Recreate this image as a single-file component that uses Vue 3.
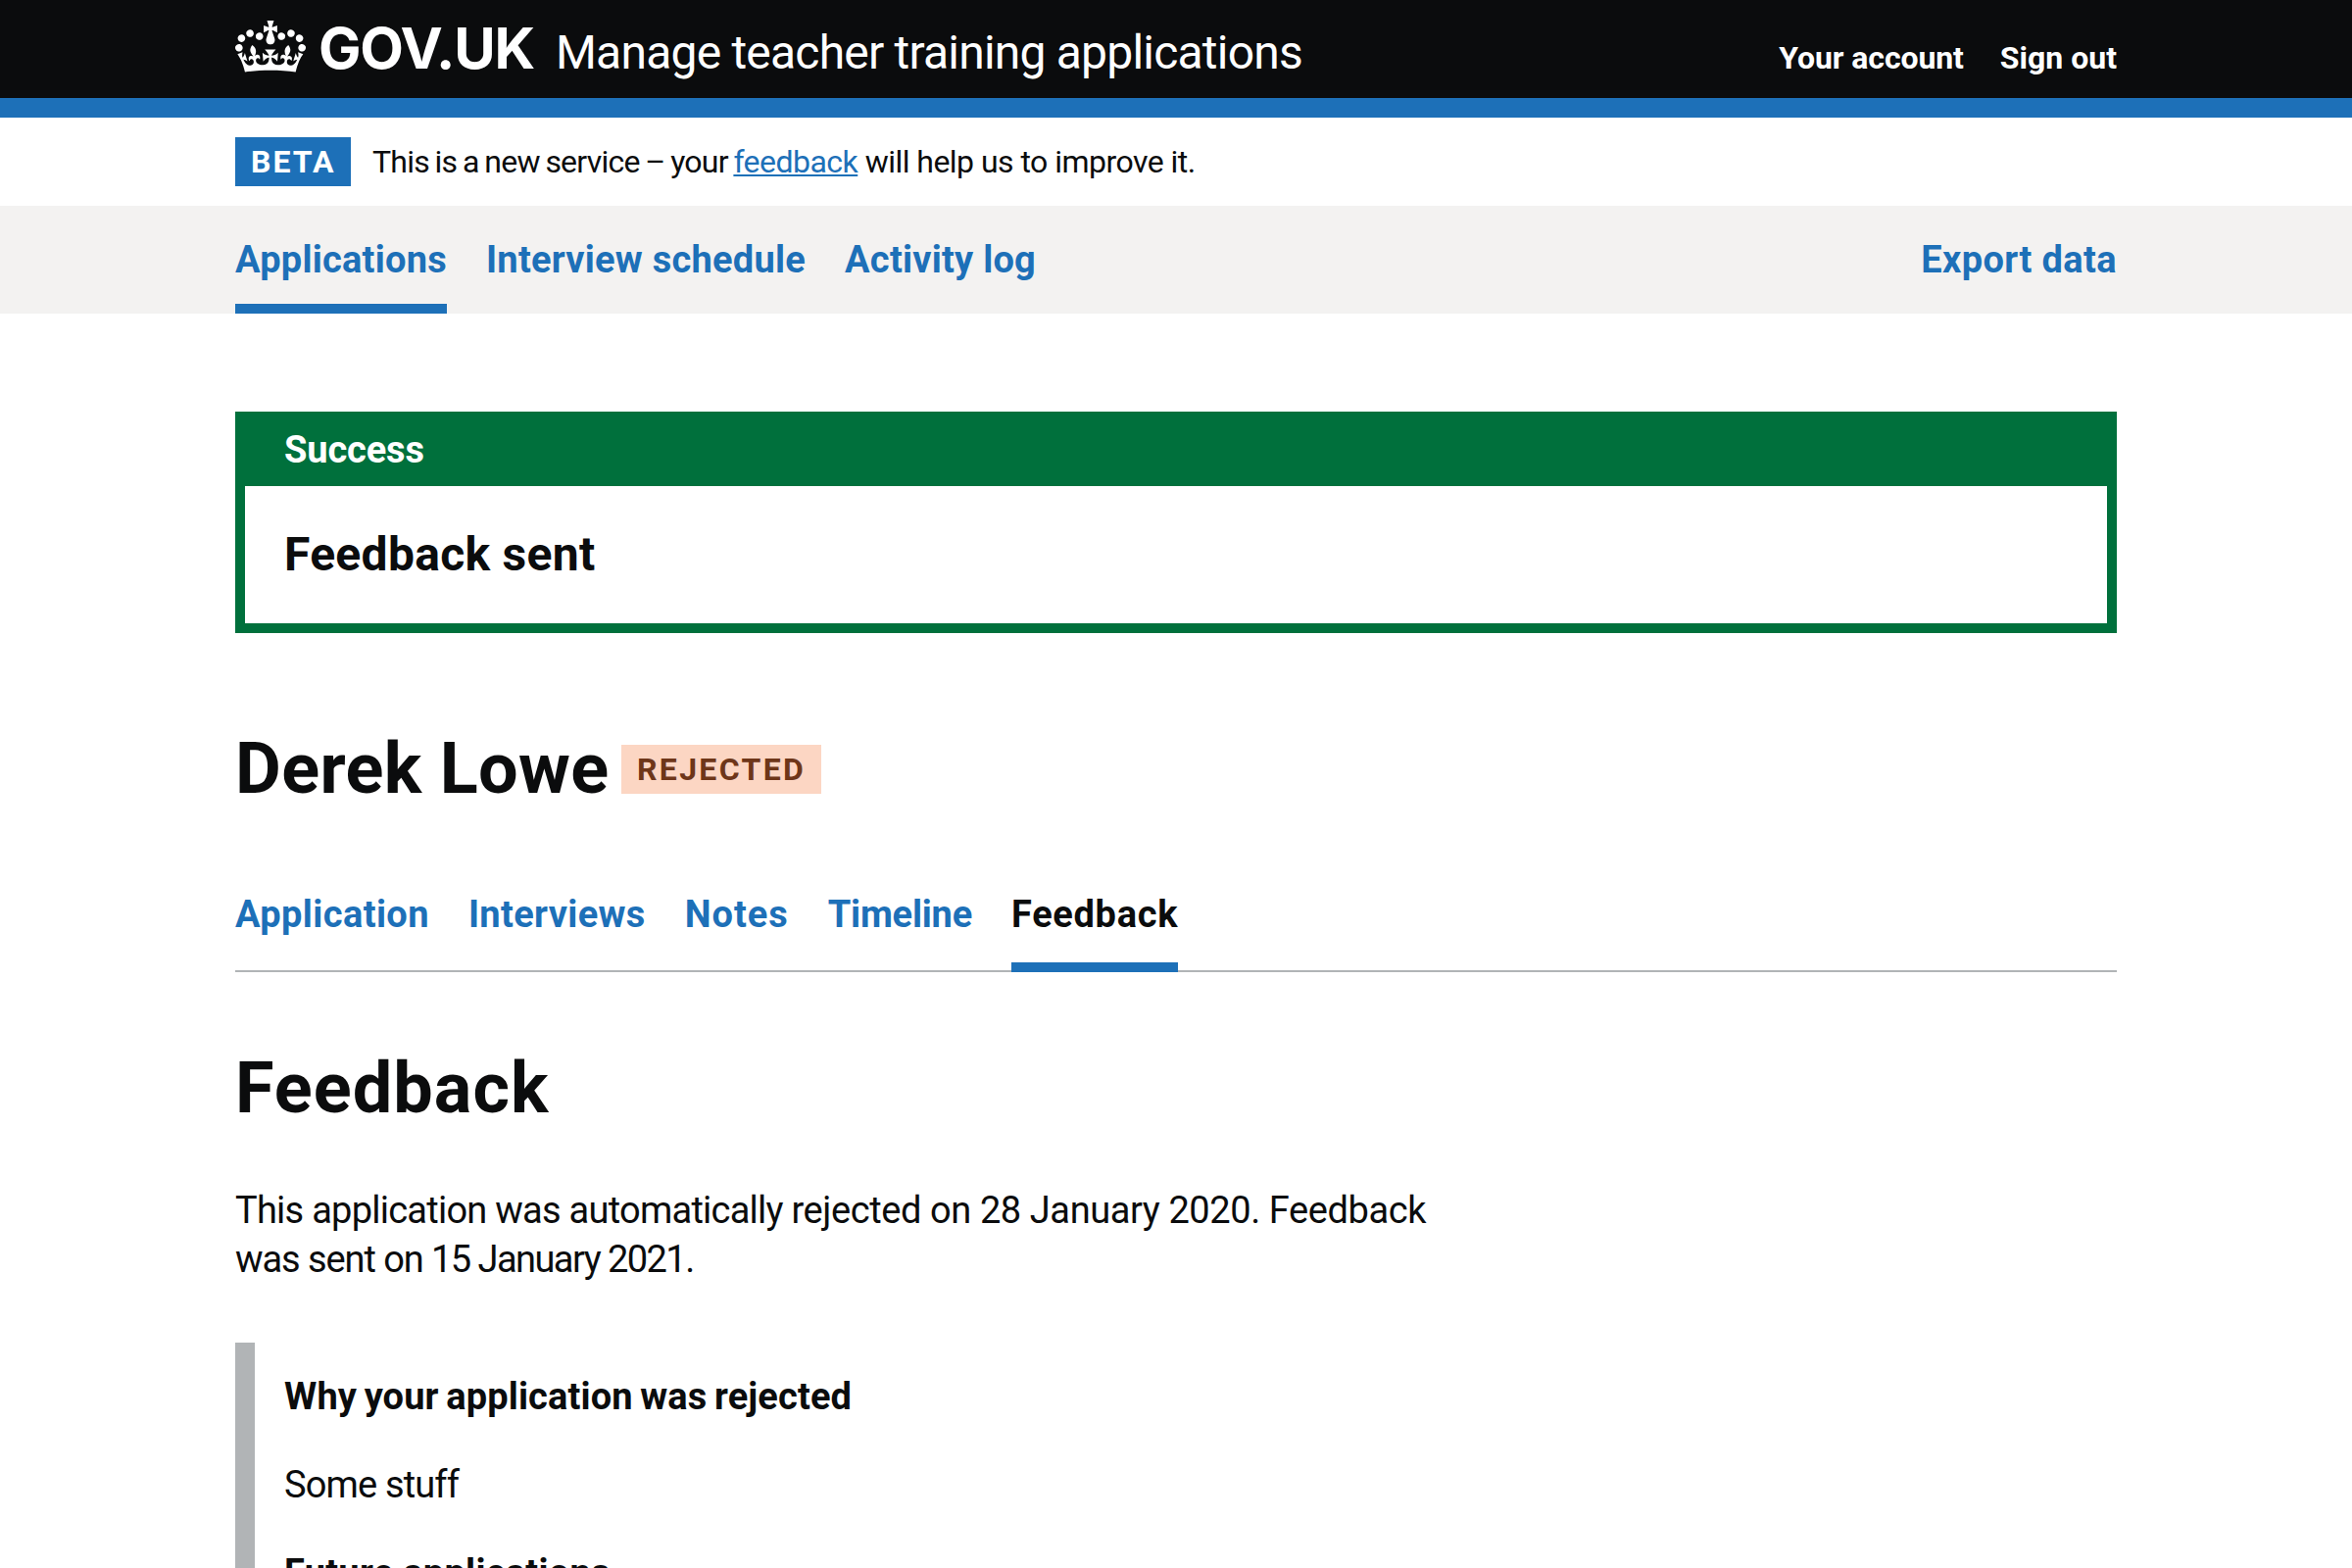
<script setup>
const primary = [
  { label: 'Applications', cls: 'apps', active: true },
  { label: 'Interview schedule', cls: 'sched' },
  { label: 'Activity log', cls: 'log' }
]
const tabs = [
  { label: 'Application', cls: 't-app' },
  { label: 'Interviews', cls: 't-int' },
  { label: 'Notes', cls: 't-notes' },
  { label: 'Timeline', cls: 't-time' },
  { label: 'Feedback', cls: 't-feed', active: true }
]
</script>

<template>
  <div class="page">
    <header class="header">
      <div class="container header-row">
        <a class="logo">
          <svg class="crown" viewBox="0 0 132 97" width="72" height="53" aria-hidden="true">
            <path fill="currentColor" fill-rule="evenodd" d="M25 30.2c3.5 1.5 7.7-.2 9.1-3.7 1.5-3.6-.2-7.8-3.9-9.2-3.6-1.4-7.6.3-9.1 3.9-1.4 3.5.3 7.5 3.9 9zM9 39.5c3.6 1.5 7.8-.2 9.2-3.7 1.5-3.6-.2-7.8-3.9-9.1-3.6-1.5-7.6.2-9.1 3.8-1.4 3.5.3 7.5 3.8 9zM4.4 57.2c3.5 1.5 7.7-.2 9.1-3.8 1.5-3.6-.2-7.7-3.9-9.1-3.5-1.5-7.6.3-9.1 3.8-1.4 3.5.3 7.6 3.9 9.1zm38.3-21.4c3.5 1.5 7.7-.2 9.1-3.8 1.5-3.6-.2-7.7-3.9-9.1-3.6-1.5-7.6.3-9.1 3.8-1.3 3.6.4 7.7 3.9 9.1zm64.4-5.6c-3.6 1.5-7.8-.2-9.1-3.7-1.5-3.6.2-7.8 3.8-9.2 3.6-1.4 7.7.3 9.2 3.9 1.3 3.5-.4 7.5-3.9 9zm15.9 9.3c-3.6 1.5-7.7-.2-9.1-3.7-1.5-3.6.2-7.8 3.7-9.1 3.6-1.5 7.7.2 9.2 3.8 1.5 3.5-.3 7.5-3.8 9zm4.7 17.7c-3.6 1.5-7.8-.2-9.2-3.8-1.5-3.6.2-7.7 3.9-9.1 3.6-1.5 7.7.3 9.2 3.8 1.3 3.5-.4 7.6-3.9 9.1zM89.3 35.8c-3.6 1.5-7.8-.2-9.2-3.8-1.4-3.6.2-7.7 3.9-9.1 3.6-1.5 7.7.3 9.2 3.8 1.4 3.6-.3 7.7-3.9 9.1zM69.7 17.7l8.9 4.7V9.3l-8.9 2.8c-.2-.3-.5-.6-.9-.9L72.4 0H59.6l3.5 11.2c-.3.3-.6.5-.9.9l-8.8-2.8v13.1l8.8-4.7c.3.3.6.7.9.9l-5 15.4v.1c-.2.8-.4 1.6-.4 2.4 0 4.1 3.1 7.5 7 8.1h.2c.3 0 .7.1 1 .1.4 0 .7 0 1-.1h.2c4-.6 7.1-4.1 7.1-8.1 0-.8-.1-1.7-.4-2.4V34l-5.1-15.4c.4-.2.7-.6 1-.9zM66 92.8c16.9 0 32.8 1.1 47.1 3.2 4-16.9 8.9-26.7 14-33.5l-9.6-3.4c1 4.9 1.1 7.2 0 10.2-1.5-1.4-3-4.3-4.2-8.7L108.6 76c2.8-2 5-3.2 7.5-3.3-4.4 9.4-10 11.9-13.6 11.2-4.3-.8-6.3-4.6-5.6-7.9 1-4.7 5.7-5.9 8-.5 4.3-8.7-3-11.4-7.6-8.8 7.1-7.2 7.9-13.5 2.1-21.1-8 6.1-8.1 12.3-4.5 20.8-4.7-5.4-12.1-2.5-9.5 6.2 3.4-5.2 7.9-2 7.2 3.1-.6 4.3-6.4 7.8-13.5 7.2-10.3-.9-10.9-8-11.2-13.8 2.5-.5 7.1 1.8 11 7.3L80.2 60c-4.1 4.4-8 5.3-12.3 5.4 1.4-4.4 8-11.6 8-11.6H55.5s6.4 7.2 7.9 11.6c-4.2-.1-8-1-12.3-5.4l1.4 16.4c3.9-5.5 8.5-7.7 10.9-7.3-.3 5.8-.9 12.8-11.1 13.8-7.2.6-12.9-2.9-13.5-7.2-.7-5 3.8-8.3 7.1-3.1 2.7-8.7-4.6-11.6-9.4-6.2 3.7-8.5 3.6-14.7-4.6-20.8-5.8 7.6-5 13.9 2.2 21.1-4.7-2.6-11.9.1-7.7 8.8 2.3-5.5 7.1-4.2 8.1.5.7 3.3-1.3 7.1-5.7 7.9-3.5.7-9-1.8-13.5-11.2 2.5.1 4.7 1.3 7.5 3.3l-4.7-15.4c-1.2 4.4-2.7 7.2-4.3 8.7-1.1-3-.9-5.3 0-10.2l-9.5 3.4c5 6.9 9.9 16.7 14 33.5 14.8-2.1 30.8-3.2 47.7-3.2z" />
          </svg>
          <span class="logotype">GOV.UK</span>
        </a>
        <a class="service">Manage teacher training applications</a>
        <nav class="account">
          <a class="your">Your account</a>
          <a>Sign out</a>
        </nav>
      </div>
    </header>

    <div class="container phase">
      <strong class="phase-tag">BETA</strong>
      <p class="phase-text"><span class="phase-intro">This is a new service – your </span><a class="phase-link">feedback</a> will help us to improve it.</p>
    </div>

    <nav class="primary">
      <div class="container primary-row">
        <a v-for="item in primary" :key="item.label" class="primary-link" :class="[item.cls, { active: item.active }]">{{ item.label }}</a>
        <a class="primary-link export">Export data</a>
      </div>
    </nav>

    <main class="container">
      <section class="banner">
        <h2 class="banner-title">Success</h2>
        <p class="banner-body">Feedback sent</p>
      </section>

      <div class="heading">
        <h1 class="name">Derek Lowe</h1>
        <strong class="status">Rejected</strong>
      </div>

      <nav class="tabs">
        <a v-for="tab in tabs" :key="tab.label" class="tab" :class="[tab.cls, { current: tab.active }]">{{ tab.label }}</a>
      </nav>

      <h2 class="title">Feedback</h2>
      <p class="lead"><span class="cause">This application was automatically </span><span class="dates">rejected on 28 January 2020. Feedback </span><span class="sent">was sent on </span><span class="sent-date">15 January 2021.</span></p>

      <div class="inset">
        <h3 class="why">Why your application was rejected</h3>
        <p class="stuff">Some stuff</p>
        <h3 class="future">Future applications</h3>
      </div>
    </main>
  </div>
</template>

<style>
body {
  margin: 0;
  background: #fff;
}
</style>

<style scoped>
.page {
  height: 1600px;
  overflow: hidden;
  color: #0b0c0d;
  background: #fff;
  font-family: Roboto, "Liberation Sans", sans-serif;
  font-size: 38px;
  line-height: 50px;
}
.container {
  width: 1920px;
  margin: 0 auto;
}
h1, h2, h3, p { margin: 0; }
a { text-decoration: none; }

/* Header */
.header {
  box-sizing: border-box;
  height: 120px;
  border-bottom: 20px solid #1d70b8;
  background: #0b0c0d;
  color: #fff;
}
.header-row {
  display: flex;
  align-items: baseline;
  padding-top: 19px;
}
.logo {
  display: flex;
  align-items: baseline;
  width: 327px;
}
.crown {
  flex: none;
  align-self: flex-start;
  margin: 2px 13px 0 0;
}
.logotype {
  font-family: Inter, "Liberation Sans", sans-serif;
  font-size: 58px;
  line-height: 60px;
  font-weight: 700;
  letter-spacing: -1.2px;
}
.service {
  font-size: 48px;
  line-height: 60px;
  letter-spacing: -0.79px;
}
.account {
  display: flex;
  gap: 37px;
  margin-left: auto;
  font-size: 32px;
  font-weight: 700;
}
.your { letter-spacing: -0.1px; }

/* Phase banner */
.phase {
  display: flex;
  align-items: center;
  height: 90px;
  font-size: 32px;
}
.phase-tag {
  box-sizing: border-box;
  width: 118px;
  padding-left: 16px;
  margin-right: 22px;
  background: #1d70b8;
  color: #fff;
  letter-spacing: 2.04px;
}
.phase-text { letter-spacing: -0.53px; }
.phase-intro {
  letter-spacing: -0.77px;
  word-spacing: -1.5px;
}
.phase-link {
  color: #1d70b8;
  text-decoration: underline;
  text-decoration-thickness: 2px;
  text-underline-offset: 2px;
  text-decoration-skip-ink: none;
}

/* Primary navigation */
.primary { background: #f3f2f1; }
.primary-row {
  display: flex;
  gap: 40px;
}
.primary-link {
  padding: 30px 0 20px;
  border-bottom: 10px solid transparent;
  color: #1d70b8;
  font-weight: 700;
}
.primary-link.active { border-color: #1d70b8; }
.apps { letter-spacing: 0.24px; }
.sched { letter-spacing: 0.25px; }
.log { letter-spacing: 0.23px; }
.export {
  margin-left: auto;
  letter-spacing: 0.37px;
}

/* Notification banner */
.banner {
  margin-top: 100px;
  border: 10px solid #00703c;
}
.banner-title {
  padding: 4px 40px 12px;
  background: #00703c;
  color: #fff;
  font-size: 38px;
  letter-spacing: -0.14px;
}
.banner-body {
  padding: 40px;
  font-size: 48px;
  line-height: 60px;
  font-weight: 700;
  letter-spacing: 0.29px;
}

/* Candidate heading */
.heading {
  display: flex;
  align-items: center;
  margin-top: 99px;
}
.name {
  width: 394px;
  font-size: 72px;
  line-height: 80px;
  letter-spacing: 0.36px;
  white-space: nowrap;
}
.status {
  box-sizing: border-box;
  width: 204px;
  padding-left: 16px;
  background: #fcd6c3;
  color: #6e3619;
  font-size: 32px;
  letter-spacing: 2.33px;
  text-transform: uppercase;
}

/* Tabs */
.tabs {
  display: flex;
  gap: 40px;
  margin-top: 83px;
  box-shadow: inset 0 -2px #b1b4b6;
}
.tab {
  padding-bottom: 24px;
  border-bottom: 10px solid transparent;
  color: #1d70b8;
  font-weight: 700;
}
.tab.current {
  border-color: #1d70b8;
  color: #0b0c0d;
}
.t-app { letter-spacing: 0.39px; }
.t-int { letter-spacing: 0.35px; }
.t-notes { letter-spacing: 0.97px; }
.t-time { letter-spacing: -0.21px; }
.t-feed { letter-spacing: 0.68px; }

/* Feedback */
.title {
  margin-top: 79px;
  font-size: 72px;
  line-height: 80px;
  letter-spacing: 1.05px;
}
.lead {
  width: 1260px;
  margin-top: 59px;
}
.cause { letter-spacing: -0.75px; }
.dates { letter-spacing: -0.41px; }
.sent { letter-spacing: -1.08px; }
.sent-date { letter-spacing: -1.55px; }

.inset {
  display: flex;
  flex-direction: column;
  gap: 40px;
  margin-top: 60px;
  padding: 30px;
  border-left: 20px solid #b1b4b6;
}
.inset h3 { font-size: 38px; }
.why {
  letter-spacing: 0.13px;
  word-spacing: -2px;
}
.stuff { letter-spacing: -0.85px; }
.future { letter-spacing: 0.26px; }
</style>
